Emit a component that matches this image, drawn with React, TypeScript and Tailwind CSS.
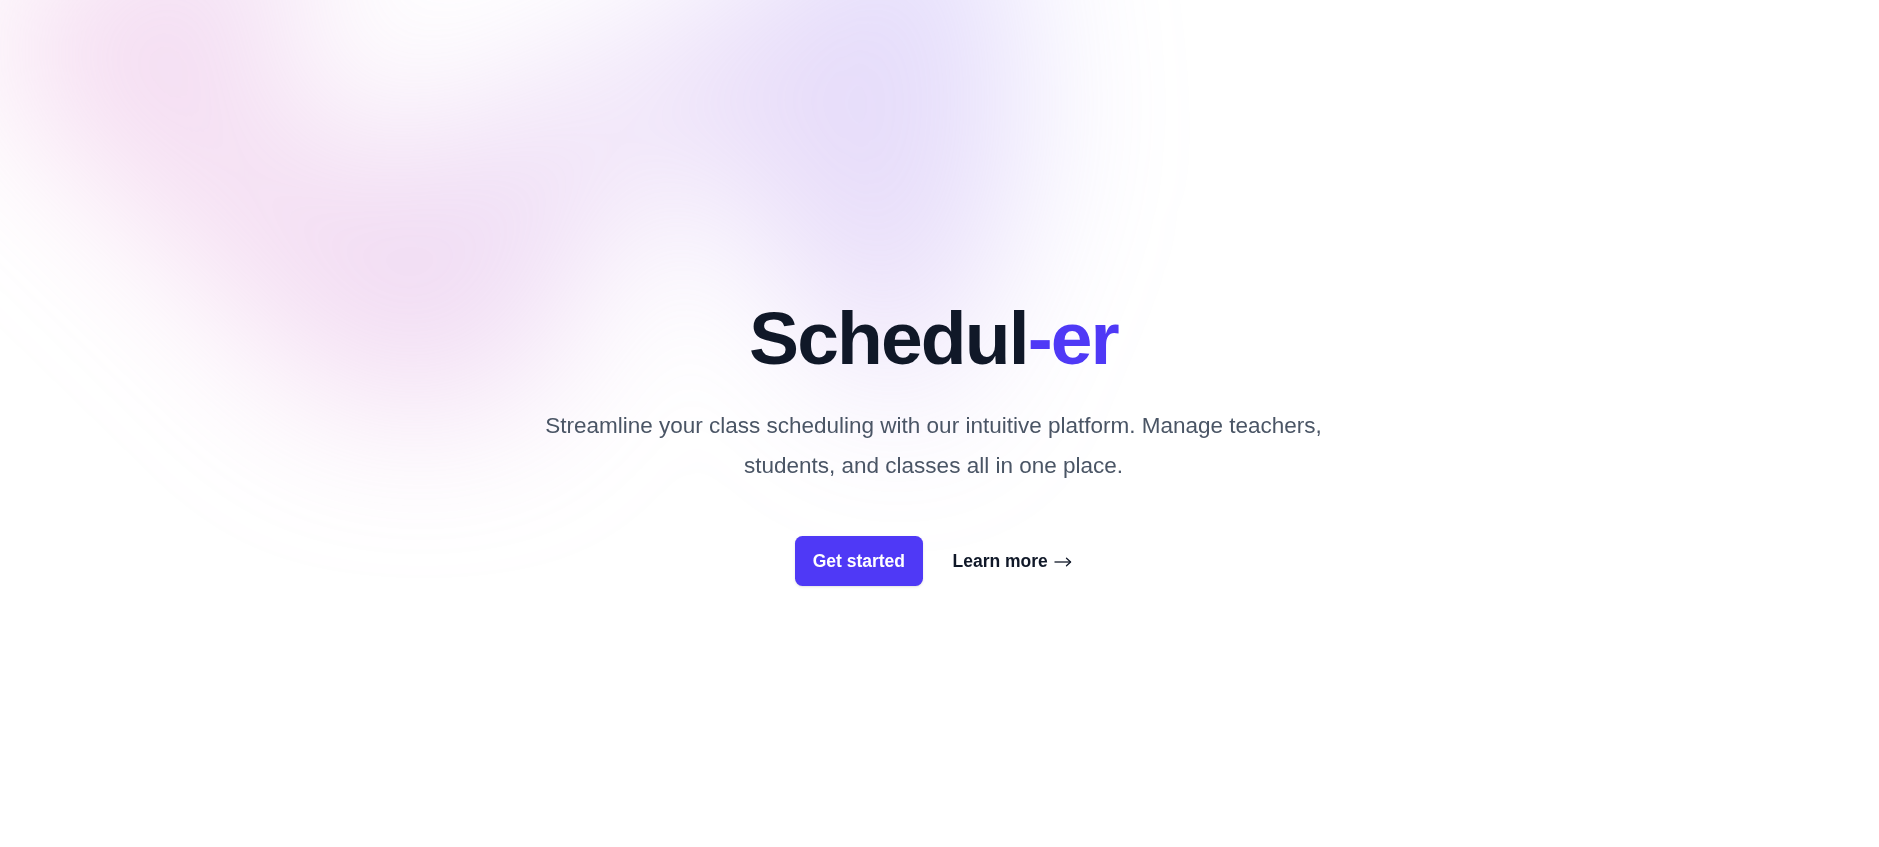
import React from "react";

export default function App() {
  return (
    <div className="relative isolate min-h-screen overflow-hidden bg-white pr-[12px] font-['Liberation_Sans',Arial,sans-serif]">
      <div
        aria-hidden="true"
        className="pointer-events-none absolute inset-x-0 top-[-440px] -z-10 transform-gpu overflow-hidden blur-[80px]"
      >
        <div className="relative left-[calc(50%-606px)] aspect-[1155/678] w-[1444px] -translate-x-1/2 rotate-[30deg] bg-gradient-to-tr from-[#ff80b5] to-[#9089fc] opacity-30 [clip-path:polygon(74.1%_44.1%,100%_61.6%,97.5%_26.9%,85.5%_0.1%,80.7%_2%,72.5%_32.5%,60.2%_62.4%,52.4%_68.1%,47.5%_58.3%,45.2%_34.5%,27.5%_76.7%,0.1%_64.9%,17.9%_100%,27.6%_76.8%,76.1%_97.7%,74.1%_44.1%)]" />
      </div>

      <main className="mx-auto max-w-[840px] pt-[301px] text-center">
        <h1 className="text-[75px] leading-none font-bold tracking-tight text-[#101828]">
          Schedul<span className="text-[#4f39f6]">-er</span>
        </h1>
        <p className="mt-[30px] text-[22.5px] leading-[40px] text-[#4a5565]">
          Streamline your class scheduling with our intuitive platform. Manage teachers, students, and classes all in one place.
        </p>
        <div className="mt-[50px] flex items-center justify-center gap-x-[30px]">
          <a
            href="#"
            className="rounded-[7.5px] bg-[#4f39f6] px-[17.5px] py-[12.5px] text-[17.5px] leading-[25px] font-semibold text-white shadow-sm"
          >
            Get started
          </a>
          <a href="#" className="flex items-center gap-[6px] text-[17.5px] leading-[30px] font-semibold text-[#101828]">
            <span>Learn more</span>
            <svg aria-hidden="true" width="18" height="10" viewBox="0 0 18 10" fill="none" className="mt-[2px]">
              <path d="M0.5 5H16.5" stroke="#101828" strokeWidth="1.3" />
              <path d="M12.5 1.3L16.6 5L12.5 8.7" stroke="#101828" strokeWidth="1.3" strokeLinecap="round" strokeLinejoin="round" />
            </svg>
          </a>
        </div>
      </main>
    </div>
  );
}
